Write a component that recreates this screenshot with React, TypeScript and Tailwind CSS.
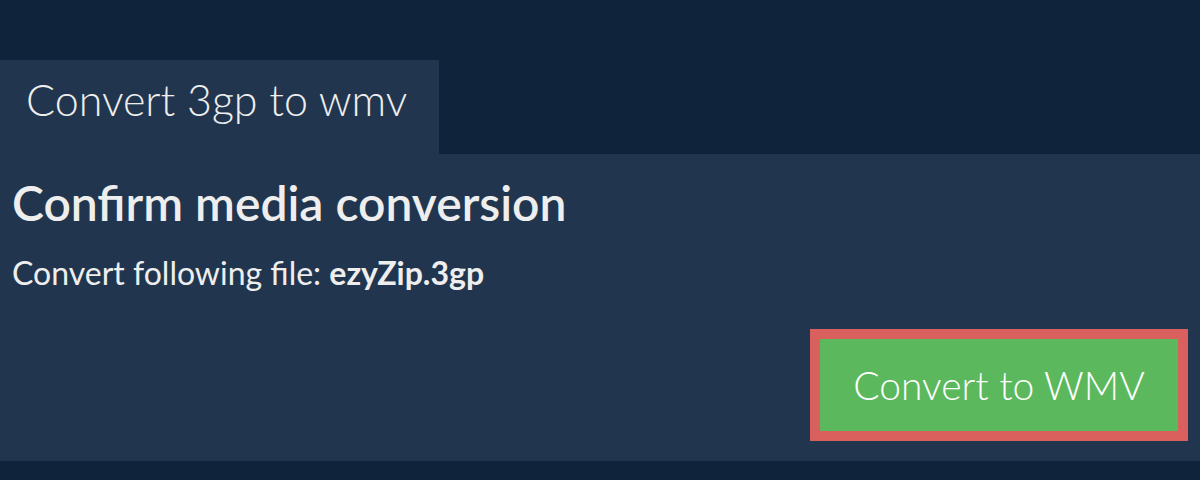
import React from 'react';

const font = { fontFamily: 'Lato, "Noto Sans", sans-serif' };

export default function App() {
  return (
    <div className="w-[1200px] h-[480px] bg-[#0f243a] flex flex-col" style={font}>
      <div className="h-[60px] shrink-0" />
      <div className="w-[439px] h-[94px] shrink-0 bg-[#21364e] pl-[26px] pt-[18px]">
        <h1 className="text-[43px] font-light text-[#eeeeee] leading-none">Convert 3gp to wmv</h1>
      </div>
      <div className="h-[307px] shrink-0 bg-[#21364e] px-[12px] pt-[21px] flex flex-col">
        <h2 className="text-[48px] font-semibold text-[#eeeeee] leading-[56px]">Confirm media conversion</h2>
        <p className="mt-[26px] text-[32px] text-[#eeeeee] leading-[32px]">
          Convert following file: <b className="font-bold">ezyZip.3gp</b>
        </p>
        <div className="mt-auto mb-[20px] flex justify-end">
          <button className="w-[378px] h-[112px] border-[10px] border-[#d9605c] bg-[#5cb85c] text-white text-[39px] font-light leading-none">
            Convert to WMV
          </button>
        </div>
      </div>
    </div>
  );
}
